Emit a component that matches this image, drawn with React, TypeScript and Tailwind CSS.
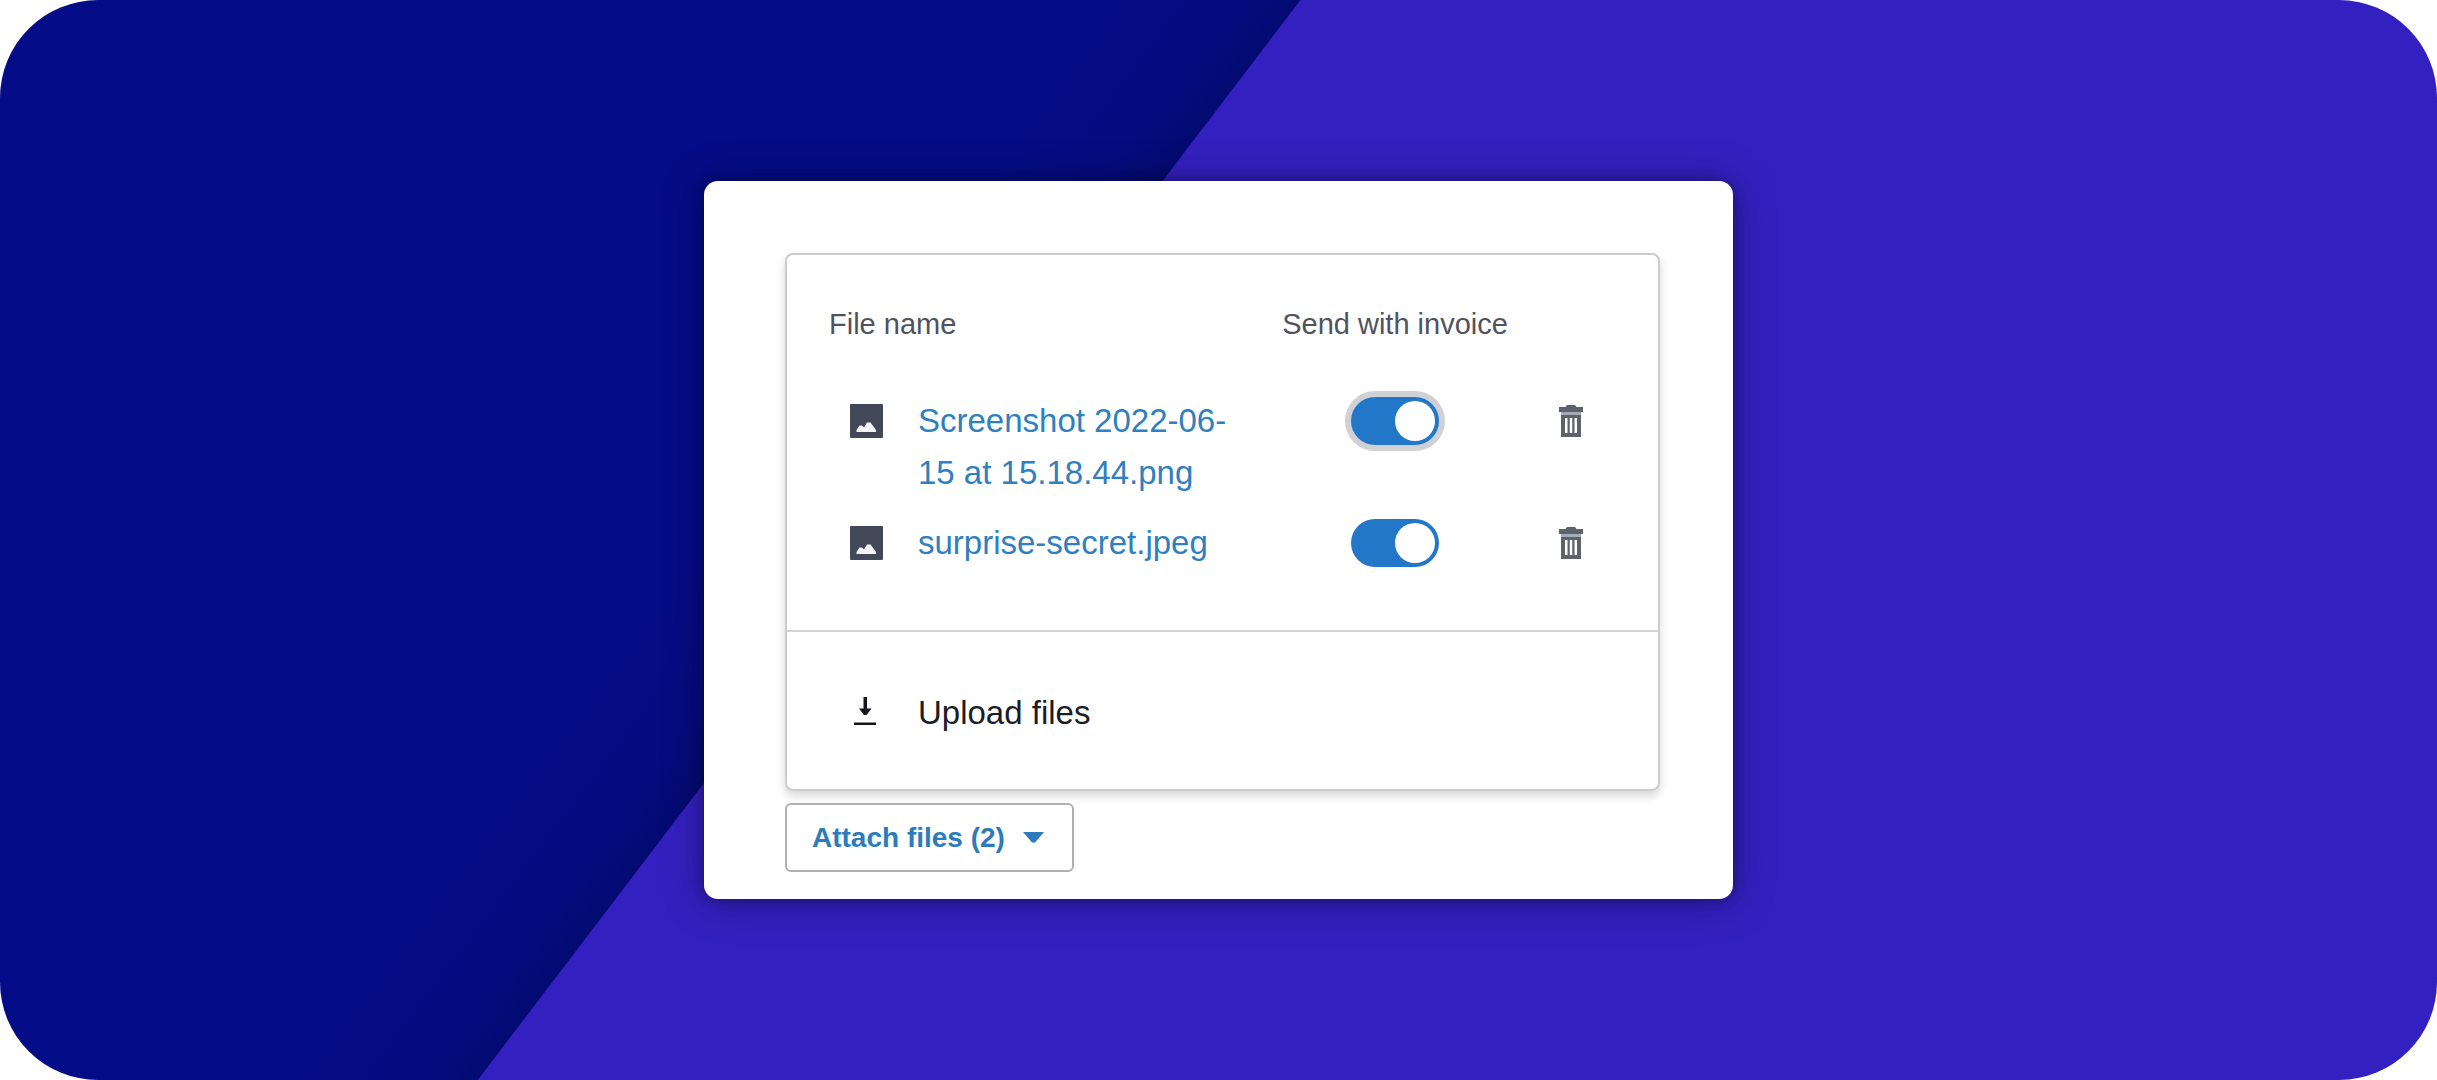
import { useState } from 'react';
import clsx from 'clsx';

interface AttachedFile {
  id: string;
  name: string;
  send: boolean;
  active?: boolean;
}

const initialFiles: AttachedFile[] = [
  {
    id: 'screenshot',
    name: 'Screenshot 2022-06-15 at 15.18.44.png',
    send: true,
    active: true,
  },
  { id: 'surprise', name: 'surprise-secret.jpeg', send: true },
];

function ImageIcon() {
  return (
    <svg viewBox="0 0 33 34" className="h-[34px] w-[33px]" aria-hidden="true">
      <rect width="33" height="34" rx="1" fill="#424857" />
      <path
        d="M6.500 28v-2l3-4.500h2.500l2 2 3-5h3.500l5.500 7.500v2z"
        fill="#f4f5f7"
      />
    </svg>
  );
}

function TrashIcon() {
  return (
    <svg viewBox="0 0 24 32" className="h-8 w-6" aria-hidden="true">
      <path d="M8 0h8l1.500 2H24v5H0V2h6.500z" fill="#5d626d" />
      <path d="M2 7h20v3H2z" fill="#a3abb8" />
      <path
        d="M2 10h20v22H2zM6 13v15h2.500V13zM10.750 13v15h2.500V13zM15.500 13v15H18V13z"
        fill="#5d626d"
        fillRule="evenodd"
      />
    </svg>
  );
}

function DownloadIcon() {
  return (
    <svg viewBox="0 0 22 32" className="h-8 w-[22px]" aria-hidden="true">
      <path d="M9.500 0h3.500v11.500h4.500L12.500 18h-2.500L5 11.500h4.500z" fill="#14141f" />
      <path d="M0 25.500h22v2.500H0z" fill="#14141f" />
    </svg>
  );
}

interface FileRowProps {
  file: AttachedFile;
  onToggle: (id: string) => void;
  onRemove: (id: string) => void;
}

function FileRow({ file, onToggle, onRemove }: FileRowProps) {
  return (
    <tr className="align-top">
      <td className="pb-[18px] pl-[42px]">
        <div className="flex h-[52px] items-center pl-[21px]">
          <ImageIcon />
        </div>
      </td>
      <td className="pr-10 pb-[18px] text-[33px] leading-[52px]">
        <a href={`#${file.id}`} className="text-[#2e80bf]">
          {file.name}
        </a>
      </td>
      <td className="pb-[18px]">
        <div className="flex h-[52px] items-center justify-center">
          <input
            type="checkbox"
            role="switch"
            aria-label={`Send ${file.name} with invoice`}
            checked={file.send}
            onChange={() => onToggle(file.id)}
            className={clsx(
              'flex h-12 w-[88px] cursor-pointer appearance-none items-center rounded-full bg-gray-400 px-1 before:size-10 before:rounded-full before:bg-white checked:justify-end checked:bg-[#2377c9]',
              file.active && 'ring-6 ring-[#cfd1d7]',
            )}
          />
        </div>
      </td>
      <td className="pb-[18px]">
        <div className="flex h-[52px] items-center justify-center">
          <button
            type="button"
            aria-label={`Delete ${file.name}`}
            onClick={() => onRemove(file.id)}
          >
            <TrashIcon />
          </button>
        </div>
      </td>
    </tr>
  );
}

export default function App() {
  const [files, setFiles] = useState(initialFiles);

  function handleToggle(id: string) {
    setFiles((current) =>
      current.map((file) =>
        file.id === id ? { ...file, send: !file.send } : file,
      ),
    );
  }

  function handleRemove(id: string) {
    setFiles((current) => current.filter((file) => file.id !== id));
  }

  return (
    <main className="flex min-h-screen items-center justify-center rounded-[98px] bg-[linear-gradient(127.3deg,#050c87_900px,#050c80_980px,#040a72_1034px,#3320c0_1035px)] font-['Liberation_Sans',Arial,sans-serif]">
      <div className="w-full max-w-[1029px] rounded-[14px] bg-white pt-[72px] pr-[73px] pb-[27px] pl-[81px] shadow-[0_0_12px_rgba(0,0,0,0.3),0_2px_40px_rgba(0,0,0,0.35)]">
        <section className="rounded-lg border-2 border-[#cbcccd] shadow-[0_5px_10px_rgba(0,0,0,0.16)]">
          <table className="w-full table-fixed">
            <colgroup>
              <col className="w-[131px]" />
              <col />
              <col className="w-[226px]" />
              <col className="w-[126px]" />
              <col className="w-6" />
            </colgroup>
            <thead>
              <tr className="text-left text-[29px] leading-[44px] text-[#50535e]">
                <th colSpan={2} className="pt-[47px] pb-[49px] pl-[42px] font-normal">
                  File name
                </th>
                <th className="pt-[47px] pb-[49px] text-center font-normal whitespace-nowrap">
                  Send with invoice
                </th>
              </tr>
            </thead>
            <tbody>
              {files.map((file) => (
                <FileRow
                  key={file.id}
                  file={file}
                  onToggle={handleToggle}
                  onRemove={handleRemove}
                />
              ))}
            </tbody>
          </table>

          <div className="mt-[43px] border-t-2 border-[#d3d5d7]">
            <button
              type="button"
              className="flex w-full items-center gap-[42px] pt-[55px] pb-[50px] pl-[67px] text-[33px] leading-[52px] text-[#1c1c29]"
            >
              <DownloadIcon />
              Upload files
            </button>
          </div>
        </section>

        <button
          type="button"
          className="mt-3 flex h-[69px] items-center gap-[18px] rounded-md border-2 border-[#adb0b3] bg-white pr-7 pl-[25px] text-[28px] font-bold text-[#2b7bbd]"
        >
          Attach files (2)
          <svg viewBox="0 0 21 11" className="h-[11px] w-[21px]" aria-hidden="true">
            <path d="M0 0h21L12 10.500H9z" fill="#2b7bbd" />
          </svg>
        </button>
      </div>
    </main>
  );
}
